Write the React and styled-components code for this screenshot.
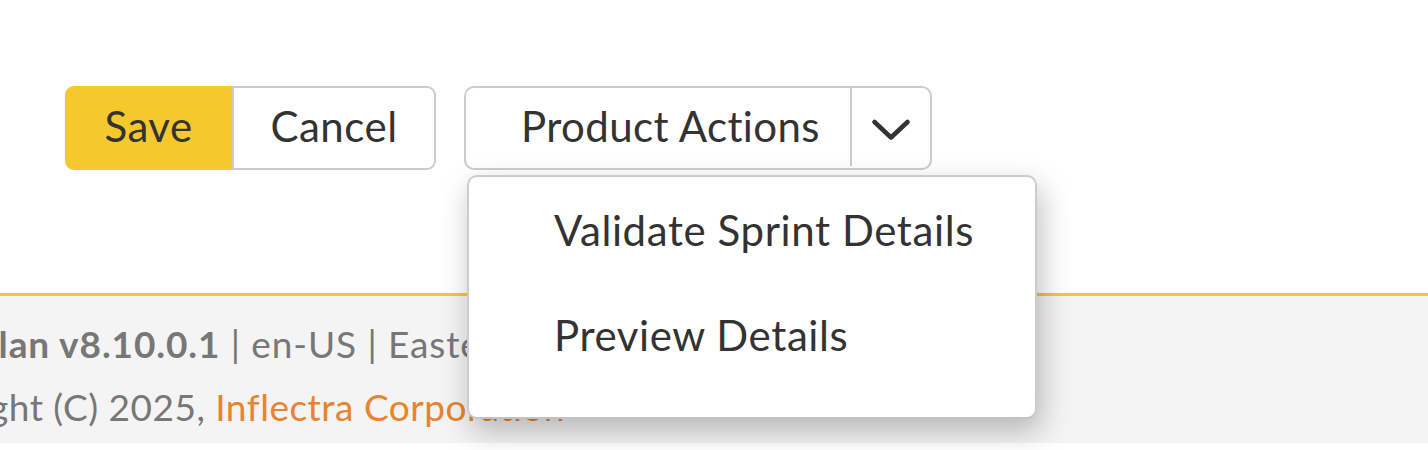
import React from 'react';
import styled, { createGlobalStyle } from 'styled-components';

const Global = createGlobalStyle`
  html, body { margin: 0; padding: 0; background: #fff; }
  body { font-family: Lato, "Noto Sans", sans-serif; color: #333; }
  * { box-sizing: border-box; }
`;

const Page = styled.div`
  width: 1428px;
  height: 450px;
  overflow: hidden;
  display: flex;
  flex-direction: column;
`;

const Main = styled.main`
  height: 293px;
  padding: 86px 0 0 65px;
  display: flex;
  align-items: flex-start;
  gap: 28px;
`;

const ButtonGroup = styled.div`
  display: flex;
  height: 84px;
`;

const Btn = styled.button`
  font-family: inherit;
  font-size: 42px;
  letter-spacing: 0.5px;
  line-height: 1;
  color: #333;
  height: 100%;
  width: ${p => p.$w}px;
  display: flex;
  align-items: center;
  justify-content: center;
  padding: 0 0 4px;
  cursor: pointer;
  background: ${p => (p.$primary ? '#f5c92c' : '#fff')};
  border: ${p => (p.$primary ? 'none' : '2px solid #ccc')};
  border-radius: ${p => (p.$primary ? '9px 0 0 9px' : '0 9px 9px 0')};
`;

const Split = styled.div`
  position: relative;
  display: flex;
  width: 468px;
  height: 84px;
  border: 2px solid #ccc;
  border-radius: 10px;
  background: #fff;
`;

const SplitMain = styled.button`
  font-family: inherit;
  font-size: 42px;
  letter-spacing: 0.4px;
  line-height: 1;
  color: #333;
  width: 384px;
  display: flex;
  align-items: center;
  padding: 0 0 4px 55px;
  background: transparent;
  border: none;
  cursor: pointer;
`;

const Divider = styled.span`
  width: 2px;
  margin-bottom: 2px;
  background: #ccc;
`;

const Toggle = styled.button`
  flex: 1;
  display: flex;
  align-items: center;
  justify-content: center;
  padding: 4px 0 0;
  background: transparent;
  border: none;
  cursor: pointer;
`;

const Menu = styled.ul`
  position: absolute;
  top: 87px;
  left: 1px;
  z-index: 2;
  width: 570px;
  height: 244px;
  margin: 0;
  padding: 1px 0 0;
  list-style: none;
  background: #fff;
  border: 2px solid #ccc;
  border-bottom-color: #c2c2c2;
  border-radius: 10px;
  box-shadow: 4px 12px 30px rgba(0, 0, 0, 0.26);
`;

const MenuItem = styled.li`
  font-size: 42px;
  letter-spacing: 0.6px;
  line-height: 63px;
  padding: 21px 0 21px 85px;
  color: #333;
  white-space: nowrap;
`;

const Footer = styled.footer`
  height: 150px;
  border-top: 3px solid #f5c92c;
  background: #f4f4f4;
  padding-top: 16px;
  overflow: hidden;
`;

const FooterLine = styled.div`
  font-size: 37px;
  letter-spacing: ${p => p.$spacing}px;
  line-height: 63px;
  color: #777;
  white-space: nowrap;
  margin-left: ${p => p.$shift}px;
`;

const Strong = styled.b`
  font-weight: 700;
`;

const Link = styled.a`
  color: #e8832f;
  text-decoration: none;
`;

const Chevron = () => (
  <svg width="38" height="22" viewBox="0 0 38 22" fill="none">
    <polyline points="2.5,3 19,18.5 35.5,3" stroke="#333" strokeWidth="4.5" strokeLinecap="round" strokeLinejoin="round" />
  </svg>
);

export default function App() {
  return (
    <>
      <Global />
      <Page>
        <Main>
          <ButtonGroup>
            <Btn $primary $w={167}>Save</Btn>
            <Btn $w={204}>Cancel</Btn>
          </ButtonGroup>
          <Split>
            <SplitMain>Product Actions</SplitMain>
            <Divider />
            <Toggle aria-label="More actions"><Chevron /></Toggle>
            <Menu>
              <MenuItem>Validate Sprint Details</MenuItem>
              <MenuItem>Preview Details</MenuItem>
            </Menu>
          </Split>
        </Main>
        <Footer>
          <FooterLine $shift={-112} $spacing={0.9}>
            <Strong>SpiraPlan v8.10.0.1</Strong> | en-US | Eastern Standard Time
          </FooterLine>
          <FooterLine $shift={-121} $spacing={0.5}>
            Copyright (C) 2025, <Link href="#">Inflectra Corporation</Link>
          </FooterLine>
        </Footer>
      </Page>
    </>
  );
}
